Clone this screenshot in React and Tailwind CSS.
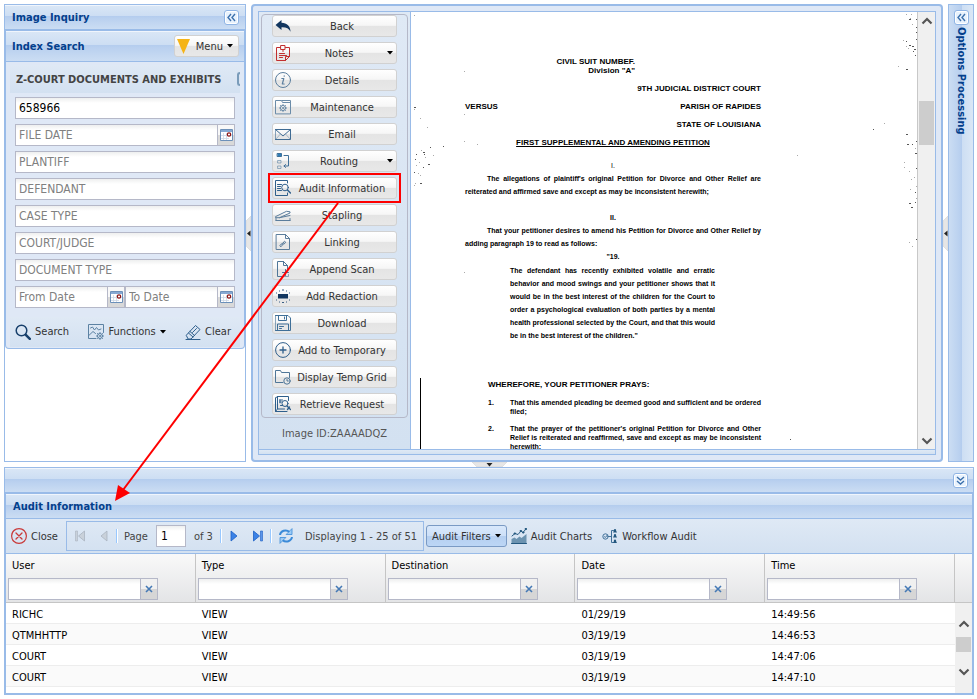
import React, { useState } from "react";

const HEADER_BG =
    "bg-[linear-gradient(180deg,#dae7f6_0%,#cddef3_45%,#b3ccee_46%,#b9d0ef_55%,#cbddf3_100%)] shadow-[inset_0_1px_0_#f0f5fc]";
const TOOLBAR_BG = "bg-linear-to-b from-[#dfe9f5] to-[#d3e1f1]";
const BUTTON_BG =
    "bg-[linear-gradient(180deg,#ffffff_0%,#f6f6f6_47%,#e4e4e4_50%,#e8e8e8_100%)] border border-[#d1d1d1] rounded-[3px]";
const FIELD_BG = "border border-[#b5b8c8] bg-[linear-gradient(180deg,#eeefef_0px,#ffffff_5px)]";

// Base wrapper for the 16px line icons
const Icon = ({ children, color = "#3f6f98" }) => (
    <svg
        viewBox="0 0 16 16"
        className="w-4 h-4 shrink-0"
        fill="none"
        stroke={color}
        strokeWidth="1"
        strokeLinecap="round"
        strokeLinejoin="round"
        aria-hidden="true"
    >
        {children}
    </svg>
);

const icons = {
    back: (
        <Icon color="none">
            <path d="M6.5 2 0.5 7l6 5V9.2c4.500-.2 7.500 1 9 4.600C15.500 8.500 12 4.900 6.500 4.800z" fill="#12365f" />
        </Icon>
    ),
    notes: (
        <Icon color="#c22f2f">
            <path d="M5.500 2.500h-4v13h9l4-4v-9h-4M10.500 15.500v-4h4" />
            <path d="M6 .5h4v4H6zM8 4.500v2" />
            <path d="M4.500 8.500h5M4.500 10.500h7M4.500 12.500h3" />
        </Icon>
    ),
    details: (
        <Icon color="#5c7f9f">
            <circle cx="8" cy="8" r="7.500" />
            <path d="M9.200 3.800v.4M6.800 6.500h2L7.300 12h1.900" strokeWidth="1.200" />
        </Icon>
    ),
    maintenance: (
        <Icon color="#6a8ba8">
            <path d="M.5 14.500v-13h6l1 2h8v11zM7 1.500h8.500v2" />
            <path d="M8 5.500v1M8 11.500v1M4.500 9h1M10.500 9h1M5.500 6.500l.7.700M9.800 10.800l.7.700M10.500 6.500l-.7.700M6.200 10.800l-.7.700" />
            <circle cx="8" cy="9" r="2.600" />
            <circle cx="8" cy="9" r=".6" />
        </Icon>
    ),
    email: (
        <Icon color="#3f6b93">
            <path d="M.5 3.500h15v10H.5zM.5 3.500 8 10l7.500-6.500" />
            <path d="m1 13 4-4.500M15 13l-4-4.500" strokeOpacity=".4" />
        </Icon>
    ),
    routing: (
        <Icon color="#3f6f98">
            <path d="M2.500.5h4v3h-4z" fill="#2f7fb8" />
            <path d="M3 7.500h3v2.500H3zM3 13h3v2.500H3z" strokeOpacity=".5" />
            <path d="M9 2.500h4.500v10.500H9M10.500 11.500 9 13l1.500 1.500" />
        </Icon>
    ),
    audit: (
        <Icon color="#2f5f8c">
            <path d="M12.500 3V.5H.5v15h12V13" />
            <path d="M2.500 4.500h4M2.500 6.500h3M2.500 8.500h3M2.500 10.500h4" />
            <circle cx="10" cy="7.500" r="3.300" />
            <path d="m12.500 10 3 3" strokeWidth="1.500" />
        </Icon>
    ),
    stapling: (
        <Icon color="#5b7d9c">
            <path d="M.8 9.500 11.500 4.300l3.500.5v1.200L4.500 10.700H.8z" />
            <path d="M4.500 10.700 15 8.500M1 13.500h14M1 11.500v2M15 11.500v2" />
        </Icon>
    ),
    linking: (
        <Icon color="#5b7d9c">
            <path d="M1.500.5h9l4 4v11h-13zM10.500.5v4h4" />
            <path d="m5 11.500 1.500-1.800 1.200 1-1.500 1.800zM8 9l1.500-1.800 1.200 1L9.200 10zM7 10.300l1.800-2" />
        </Icon>
    ),
    append: (
        <Icon color="#4f7698">
            <path d="M7 15.500H2.500V.5h6l4 4v4M8.500.5v4h4" />
            <path d="M10.500 8.500v6M7.500 11.500h6" />
            <path d="M9 15.500h4.500v-2" strokeOpacity=".6" />
        </Icon>
    ),
    redaction: (
        <Icon color="none">
            <path d="M3 6h10v4.500H3z" fill="#12365f" />
            <path
                d="M4 2.500h1v1H4zM7 1.500h2v1H7zM11 2.500h1v1h-1zM1 4.500h1v1H1zM14 4.500h1v1h-1zM1 11.500h1v1H1zM14 11.500h1v1h-1zM4 13.500h1v1H4zM7 14h2v1H7zM11 13.500h1v1h-1z"
                fill="#3b5f85"
            />
        </Icon>
    ),
    download: (
        <Icon color="#3f6f98">
            <path d="M.5.5h12.500l2.500 2.500v12.500H.5z" />
            <path d="M3.500.5v5h8v-5M9.500 2v2M2.500 15.500v-6.500h11v6.500M4.500 11.500h4M4.500 13.500h2" />
        </Icon>
    ),
    plus: (
        <Icon color="#2f5f8c">
            <circle cx="8" cy="8" r="7.400" />
            <path d="M8 5v6M5 8h6" strokeWidth="1.300" />
        </Icon>
    ),
    tempGrid: (
        <Icon color="#4f7698">
            <path d="M8 13.500H.5v-12h5l1 2h8v5" />
            <circle cx="12" cy="12" r="3.200" />
            <path d="M12 10.500V12h1.300" />
        </Icon>
    ),
    retrieve: (
        <Icon color="#2f5f8c">
            <path d="M.5 2v13.500h11.500M2.500.5h11v4M2.500.5v12.500h7M.5 2l2-1.500M.5 15.500l2-2.500" />
            <path d="M4.500 4h3M4.500 6h2M5.500 9.500h2M5 4v3" />
            <circle cx="10" cy="7.500" r="3" />
            <path d="m12 10 3.500 3.500M12.500 13.500l2-2.500" strokeWidth="1.300" />
        </Icon>
    ),
    search: (
        <Icon color="#173f6b">
            <circle cx="6.500" cy="6.500" r="5.300" strokeWidth="1.500" />
            <path d="m10.800 10.800 4 4" strokeWidth="2.500" />
        </Icon>
    ),
    functions: (
        <Icon color="#5c82a3">
            <path d="M8 14.500H.5V.5h15v8M.8 11.500 5 7.500l2.500 2" />
            <path d="m2.500 4 2-1 2 3 2-2.500 2 2.500 2.500-1" />
            <path d="M12 8.500v1M12 14.500v1M8.500 12h1M14.500 12h1M9.500 9.500l.7.700M13.800 13.800l.7.700M14.500 9.500l-.7.700M10.200 13.800l-.7.700" />
            <circle cx="12" cy="12" r="2.500" />
            <circle cx="12" cy="12" r=".6" />
        </Icon>
    ),
    clear: (
        <Icon color="#2f5f8c">
            <path d="m1.500 11 9-9.500 4.500 4-9 9.500H3.500zM3.500 9l4.500 4M5 7.500l4.500 4M7.500 8.500l4-4M1 15.500h14" />
        </Icon>
    ),
    close: (
        <Icon color="#c93a3a">
            <circle cx="8" cy="8" r="7.400" strokeWidth="1.200" />
            <path d="m5 5 6 6M11 5l-6 6" strokeWidth="1.300" />
        </Icon>
    ),
    charts: (
        <Icon color="#24587f">
            <path d="M.5 15.500V11l3-1.500 2 1.500 3-2.500 2 1.500 5-4v9.500z" fill="#6c93b0" stroke="none" />
            <path d="M.5 15.500h15" />
            <path d="m1 8 3-2.500 3 1L10 3l2 1.500L15 1" />
            <path d="M3.500 5h1v1h-1zM9.500 2.500h1v1h-1zM12 4h1v1h-1zM14.500.5h1v1h-1z" fill="#24587f" />
        </Icon>
    ),
    workflow: (
        <Icon color="#3f6f98">
            <circle cx="3.500" cy="8.500" r="2.700" />
            <path d="m2.300 8.500 1 1 2-2.300M6.500 8.500h3M11.500 2.500h-2v12h2" />
            <path d="M13 1a1 1 0 0 1 1 1.500l1 2h-4l1-2A1 1 0 0 1 13 1zM13 6a1 1 0 0 1 1 1.500l1 2h-4l1-2A1 1 0 0 1 13 6zM13 11.500a1 1 0 0 1 1 1.500l1 2h-4l1-2a1 1 0 0 1 1-1.500z" fill="#24587f" stroke="none" />
        </Icon>
    ),
    refresh: (
        <Icon color="#3a8ad8">
            <path d="M2 7C2.500 3 8 .8 11.500 4M14 9c-.5 4-6 6.200-9.500 3" strokeWidth="2" strokeLinecap="butt" />
            <path d="M14 1v5.500H8.500zM2 15V9.500h5.500z" fill="#9ccbf5" strokeWidth=".8" />
        </Icon>
    ),
};

const Caret = () => (
    <svg viewBox="0 0 6 4" className="w-[6px] h-[4px] shrink-0" aria-hidden="true">
        <path d="M0 0h6L3 3.500z" fill="#000" />
    </svg>
);

// Small square tool in panel headers
const ToolButton = ({ label, down = false }) => (
    <button
        type="button"
        aria-label={label}
        className="w-[15px] h-[15px] shrink-0 flex items-center justify-center rounded-[3px] border border-[#8fb4e4] bg-[#e8f2fd] shadow-[inset_0_0_0_1px_#ffffff]"
    >
        <svg
            viewBox="0 0 9 9"
            className={down ? "w-[9px] h-[9px] -rotate-90" : "w-[9px] h-[9px]"}
            fill="none"
            stroke="#3d71ad"
            strokeWidth="1.400"
            aria-hidden="true"
        >
            <path d="M4 1 1 4.500 4 8M8 1 5 4.500 8 8" />
        </svg>
    </button>
);

const Splitter = () => (
    <div className="w-[5px] shrink-0 flex items-center">
        <svg viewBox="0 0 5 35" className="w-[5px] h-[35px]" aria-hidden="true">
            <path d="M5 0 0 5v25l5 5z" fill="#e6e6e6" stroke="#cfcfcf" strokeWidth=".5" />
            <path d="M4.500 14.500v6L1 17.500z" fill="#222" />
        </svg>
    </div>
);

const Chevron = ({ down = false }) => (
    <svg
        viewBox="0 0 12 8"
        className={down ? "w-3 h-2 rotate-180" : "w-3 h-2"}
        fill="none"
        stroke="#555"
        strokeWidth="2.200"
        aria-hidden="true"
    >
        <path d="m1.500 6.500 4.500-4.500 4.500 4.500" />
    </svg>
);

const DateTrigger = ({ label }) => (
    <button
        type="button"
        aria-label={label}
        className="w-[17px] h-[22px] shrink-0 flex items-center justify-center border border-l-0 border-[#b5b8c8] bg-[linear-gradient(180deg,#f8f8f8_50%,#d9d9d9_51%)]"
    >
        <svg viewBox="0 0 13 12" className="w-[13px] h-[12px]" aria-hidden="true">
            <path d="M.5.5h12v11H.5z" fill="#fff" stroke="#6c90b9" />
            <path d="M1 1h11v2H1z" fill="#86a9d3" />
            <path d="M3.500 4v7M6.500 4v7M1 6.500h11M1 9.500h8" stroke="#ccd7e4" strokeWidth=".8" />
            <circle cx="9" cy="5.500" r="1.700" fill="#fff" stroke="#8c1414" strokeWidth="1.200" />
        </svg>
    </button>
);

const Field = ({ label, value, onChange, date = false }) => (
    <div className="flex flex-1 min-w-0">
        <input
            type="text"
            aria-label={label}
            placeholder={label}
            value={value}
            onChange={onChange}
            className={`flex-1 min-w-0 h-[22px] px-[3px] text-[12px] text-black placeholder:text-[#808080] outline-none ${FIELD_BG}`}
        />
        {date && <DateTrigger label={`Pick ${label}`} />}
    </div>
);

const actions = [
    { name: "Back", icon: "back" },
    { name: "Notes", icon: "notes", menu: true },
    { name: "Details", icon: "details" },
    { name: "Maintenance", icon: "maintenance" },
    { name: "Email", icon: "email" },
    { name: "Routing", icon: "routing", menu: true },
    { name: "Audit Information", icon: "audit" },
    { name: "Stapling", icon: "stapling" },
    { name: "Linking", icon: "linking" },
    { name: "Append Scan", icon: "append" },
    { name: "Add Redaction", icon: "redaction" },
    { name: "Download", icon: "download" },
    { name: "Add to Temporary", icon: "plus" },
    { name: "Display Temp Grid", icon: "tempGrid" },
    { name: "Retrieve Request", icon: "retrieve" },
];

const columns = ["User", "Type", "Destination", "Date", "Time"];

const rows = [
    ["RICHC", "VIEW", "", "01/29/19", "14:49:56"],
    ["QTMHHTTP", "VIEW", "", "03/19/19", "14:46:53"],
    ["COURT", "VIEW", "", "03/19/19", "14:47:06"],
    ["COURT", "VIEW", "", "03/19/19", "14:47:10"],
];

const SearchPanel = () => {
    const [form, setForm] = useState({ number: "658966" });
    const bind = (key) => ({
        value: form[key] || "",
        onChange: (e) => setForm({ ...form, [key]: e.target.value }),
    });

    return (
        <aside className="w-[242px] shrink-0 border border-[#99bbe8]">
            <div className={`h-6 pl-[7px] pr-[6px] flex items-center justify-between ${HEADER_BG}`}>
                <h1 className="pt-[2px] font-bold text-[#04408c]">Image Inquiry</h1>
                <ToolButton label="Collapse search panel" />
            </div>
            <section className="border border-t-2 border-[#99bbe8] rounded-b-[4px] bg-[#dfe8f6]">
                <div className={`h-[30px] pl-[6px] pr-[5px] flex items-center justify-between ${HEADER_BG}`}>
                    <h2 className="pt-[2px] font-bold text-[#04408c]">Index Search</h2>
                    <button type="button" className={`h-[22px] pl-[2px] pr-[5px] flex items-center gap-1 text-[#333] ${BUTTON_BG}`}>
                        <svg viewBox="0 0 13 15" className="w-[13px] h-[15px] mr-[2px]" aria-hidden="true">
                            <path d="M0 0h13L6.500 15z" fill="#f5b417" />
                        </svg>
                        <span className="pt-[2px]">Menu</span>
                        <Caret />
                    </button>
                </div>
                <div className="border-t border-[#99bbe8] px-1 pt-[3px] pb-px">
                    <div className={`h-7 pl-[6px] flex items-center overflow-hidden whitespace-nowrap font-bold text-[#444] ${TOOLBAR_BG}`}>
                        <span className="pt-[2px]">Z-COURT DOCUMENTS AND EXHIBITS</span>
                        <span className="ml-auto w-[3px] h-[14px] shrink-0 rounded-l-[3px] border-2 border-r-0 border-[#7a9cba]"></span>
                    </div>
                    <form className="px-[5px] pt-1 flex flex-col gap-[5px]" onSubmit={(e) => e.preventDefault()}>
                        <div className="flex"><Field label="NUMBER" {...bind("number")} /></div>
                        <div className="flex"><Field label="FILE DATE" date {...bind("fileDate")} /></div>
                        <div className="flex"><Field label="PLANTIFF" {...bind("plaintiff")} /></div>
                        <div className="flex"><Field label="DEFENDANT" {...bind("defendant")} /></div>
                        <div className="flex"><Field label="CASE TYPE" {...bind("caseType")} /></div>
                        <div className="flex"><Field label="COURT/JUDGE" {...bind("court")} /></div>
                        <div className="flex"><Field label="DOCUMENT TYPE" {...bind("docType")} /></div>
                        <div className="flex">
                            <Field label="From Date" date {...bind("from")} />
                            <Field label="To Date" date {...bind("to")} />
                        </div>
                    </form>
                    <div className={`h-[30px] mt-[9px] pl-[5px] pr-[9px] flex items-center justify-between text-[#333] ${TOOLBAR_BG}`}>
                        <button type="button" className="flex items-center gap-1">{icons.search}Search</button>
                        <button type="button" className="flex items-center gap-1">{icons.functions}Functions<Caret /></button>
                        <button type="button" className="flex items-center gap-1">{icons.clear}Clear</button>
                    </div>
                </div>
            </section>
        </aside>
    );
};

// Scanner specks along the page edges: [x, y, darkness]
const specks = [
    [3, 3, 1], [3, 95, 3], [3, 97, 1], [9, 106, 1], [16, 115, 1], [53, 59, 1], [53, 102, 1], [53, 129, 1],
    [66, 132, 1], [32, 134, 2], [19, 135, 2], [10, 138, 1], [5, 142, 2], [12, 140, 3], [13, 142, 2], [4, 147, 2],
    [14, 145, 1], [22, 143, 1], [17, 152, 3], [8, 150, 1], [5, 153, 1], [12, 155, 2], [7, 161, 1], [3, 160, 2],
    [9, 163, 1], [4, 171, 1], [9, 171, 3], [3, 173, 1], [53, 260, 1],
    [495, 2, 1], [500, 2, 1], [498, 7, 3], [505, 7, 3], [501, 12, 1], [505, 15, 3], [505, 20, 2], [499, 6, 1],
    [505, 27, 3], [495, 29, 2], [492, 28, 1], [498, 33, 3], [501, 34, 3], [497, 36, 1], [503, 37, 3], [502, 39, 2],
    [495, 34, 1], [504, 43, 2], [487, 54, 1], [495, 57, 3], [473, 111, 1], [462, 117, 2], [495, 122, 3],
    [505, 129, 2], [496, 132, 3], [501, 132, 2], [504, 136, 1], [504, 141, 3], [493, 150, 1], [493, 155, 1],
    [505, 156, 2], [498, 159, 1], [503, 165, 1], [500, 167, 1], [505, 174, 1], [499, 177, 1], [504, 180, 2],
    [505, 186, 1], [504, 190, 2], [498, 191, 3], [500, 195, 3], [386, 143, 1], [505, 227, 2], [498, 230, 1],
    [501, 234, 1], [379, 427, 2],
];

const ScannedPage = () => (
    <div className="relative flex-1 contain-size overflow-hidden bg-white">
        <article className="w-[296px] ml-[54px] pt-[45px] font-['Liberation_Sans',sans-serif] text-[7px] font-bold leading-[13px] text-black">
            <header className="text-[8px]">
                <div className="w-[170px] leading-[9px] text-right">CIVIL SUIT NUMBEF.<br />Division "A"</div>
                <div className="mt-[5px] leading-[18px] text-right">9TH JUDICIAL DISTRICT COURT</div>
                <div className="leading-[18px] flex justify-between"><span>VERSUS</span><span>PARISH OF RAPIDES</span></div>
                <div className="leading-[18px] text-right">STATE OF LOUISIANA</div>
                <div className="leading-[18px] text-center underline">FIRST SUPPLEMENTAL AND AMENDING PETITION</div>
            </header>
            <div className="mt-[7px] text-center font-normal">I.</div>
            <p className="indent-[22px] text-justify">
                The allegations of plaintiff's original Petition for Divorce and Other Relief are reiterated and affirmed save
                and except as may be inconsistent herewith;
            </p>
            <div className="mt-[13px] text-center">II.</div>
            <p className="indent-[22px] text-justify">
                That your petitioner desires to amend his Petition for Divorce and Other Relief by adding paragraph 19 to read as
                follows:
            </p>
            <div className="text-center">"19.</div>
            <p className="mt-px ml-[45px] w-[205px] text-justify">
                The defendant has recently exhibited volatile and erratic behavior and mood swings and your petitioner shows that
                it would be in the best interest of the children for the Court to order a psychological evaluation of both parties
                by a mental health professional selected by the Court, and that this would be in the best interest of the
                children."
            </p>
            <h3 className="mt-[38px] pl-[23px] text-[8px] leading-[9px]">WHEREFORE, YOUR PETITIONER PRAYS:</h3>
            <ol className="mt-[9px] pl-[23px] flex flex-col gap-2 leading-[9px]">
                <li className="flex">
                    <span className="w-[22px] shrink-0">1.</span>
                    <span className="text-justify">That this amended pleading be deemed good and sufficient and be ordered filed;</span>
                </li>
                <li className="flex">
                    <span className="w-[22px] shrink-0">2.</span>
                    <span className="text-justify">
                        That the prayer of the petitioner's original Petition for Divorce and Other Relief is reiterated and
                        reaffirmed, save and except as may be inconsistent herewith;
                    </span>
                </li>
            </ol>
        </article>
        <svg className="absolute left-0 top-0 w-full h-full" aria-hidden="true">
            {specks.map(([x, y, dark]) => (
                <rect key={`${x}-${y}`} x={x} y={y} width={dark > 2 ? 2 : 1} height="1" fill={dark > 1 ? "#555" : "#aaa"} />
            ))}
            <path d="M9.500 366v71" stroke="#000" strokeWidth="1" />
        </svg>
    </div>
);

const Viewer = () => (
    <main className="flex-1 min-w-0 flex flex-col border-2 border-[#99bbe8] rounded-[4px] bg-[#dfe8f6] p-[5px]">
        <div className="flex-1 flex border border-[#99bbe8]">
            <div className={`w-[152px] shrink-0 p-[2px] border-r border-[#99bbe8] ${TOOLBAR_BG}`}>
                <div className="border border-[#b5b8c8] rounded-[4px] px-[10px] pb-[2px] flex flex-col gap-[5px]">
                    {actions.map(({ name, icon, menu }) => (
                        <button key={name} type="button" className={`h-[22px] pl-[2px] pr-[3px] flex items-center text-[#333] ${BUTTON_BG}`}>
                            {icons[icon]}
                            <span className="flex-1 pt-[2px] text-center whitespace-nowrap">{name}</span>
                            {menu && <Caret />}
                        </button>
                    ))}
                </div>
                <div className="h-[29px] pt-[2px] flex items-center justify-center text-[#555]">Image ID:ZAAAADQZ</div>
            </div>
            <ScannedPage />
            <div className="w-[18px] shrink-0 border-l border-[#c8c8c8] bg-[#f0f0f0] flex flex-col items-center pt-[5px] pb-1">
                <Chevron />
                <div className="mt-[76px] w-[15px] h-11 bg-[#cdcdcd]"></div>
                <div className="mt-auto flex"><Chevron down /></div>
            </div>
        </div>
        <div className={`h-[5px] border border-t-0 border-[#99bbe8] ${TOOLBAR_BG}`}></div>
    </main>
);

const PageArrow = ({ label, disabled = false, bar = false, back = false }) => (
    <button type="button" aria-label={label} disabled={disabled} className="w-6 h-[22px] flex items-center justify-center">
        <svg viewBox="0 0 12 12" className={back ? "w-3 h-3 rotate-180" : "w-3 h-3"} aria-hidden="true">
            <path
                d={bar ? "M1.500 1v10L7.500 6z" : "M3 1v10l6-5z"}
                fill={disabled ? "#c9d1da" : "#3b82e6"}
                stroke={disabled ? "#a9b4c0" : "#1c5fc4"}
                strokeWidth=".8"
            />
            {bar && <path d="M8.500 1h2v10h-2z" fill={disabled ? "#c9d1da" : "#5b95ea"} stroke={disabled ? "#a9b4c0" : "#1c5fc4"} strokeWidth=".6" />}
        </svg>
    </button>
);

const Separator = () => <span className="w-[2px] h-[14px] shrink-0 border-l border-[#98c8ff] border-r border-r-white"></span>;

const AuditPanel = () => {
    const [page, setPage] = useState("1");

    return (
        <section className="border border-[#99bbe8]">
            <div className={`h-6 pr-[5px] flex items-center justify-end ${HEADER_BG}`}>
                <ToolButton label="Collapse audit panel" down />
            </div>
            <div className="border-t-2 border-x border-b border-[#99bbe8]">
                <h2 className={`h-6 pt-[2px] pl-[7px] flex items-center font-bold text-[#04408c] ${HEADER_BG}`}>Audit Information</h2>
                <div className={`border-y border-[#99bbe8] h-9 pl-[5px] flex items-center text-[#333] whitespace-nowrap ${TOOLBAR_BG}`}>
                    <button type="button" className="w-[55px] flex items-center gap-1">
                        {icons.close}
                        <span className="pt-[2px]">Close</span>
                    </button>
                    <div className="h-[30px] pl-px pr-[6px] border border-[#99bbe8] flex items-center text-[#444]">
                        <PageArrow label="First page" disabled bar back />
                        <PageArrow label="Previous page" disabled back />
                        <Separator />
                        <label className="ml-[6px] flex items-center gap-2">
                            <span className="pt-[2px]">Page</span>
                            <input
                                type="text"
                                value={page}
                                onChange={(e) => setPage(e.target.value)}
                                className={`w-[30px] h-[22px] px-1 text-[12px] text-black outline-none ${FIELD_BG}`}
                            />
                        </label>
                        <span className="pt-[2px] ml-2 mr-[7px]">of 3</span>
                        <Separator />
                        <PageArrow label="Next page" />
                        <PageArrow label="Last page" bar />
                        <Separator />
                        <button type="button" aria-label="Refresh" className="ml-[6px] mr-[11px]">{icons.refresh}</button>
                        <span className="pt-[2px]">Displaying 1 - 25 of 51</span>
                    </div>
                    <button
                        type="button"
                        className="ml-[2px] h-[22px] px-[5px] flex items-center gap-1 rounded-[3px] border border-[#7a9ac4] bg-[linear-gradient(180deg,#d9e8fb_0%,#cde0f8_48%,#b5cff0_52%,#bcd6f5_100%)]"
                    >
                        <span className="pt-[2px]">Audit Filters</span>
                        <Caret />
                    </button>
                    <button type="button" className="ml-1 flex items-center gap-1">
                        {icons.charts}
                        <span className="pt-[2px]">Audit Charts</span>
                    </button>
                    <button type="button" className="ml-[10px] flex items-center gap-1">
                        {icons.workflow}
                        <span className="pt-[2px]">Workflow Audit</span>
                    </button>
                </div>
                <table className="w-full table-fixed border-separate border-spacing-0 text-black">
                    <colgroup>
                        {columns.map((c) => <col key={c} />)}
                        <col className="w-[17px]" />
                    </colgroup>
                    <thead>
                        <tr className="bg-linear-to-b from-[#f9f9f9] to-[#e3e4e6]">
                            {columns.map((c) => (
                                <th key={c} className="h-[49px] px-[2px] border-r border-b border-[#c5c5c5] font-normal text-left align-bottom pb-[2px]">
                                    <div className="px-1 h-6 leading-6">{c}</div>
                                    <div className="flex w-[150px]">
                                        <input type="text" aria-label={`Filter ${c}`} className={`flex-1 min-w-0 h-[22px] px-1 outline-none ${FIELD_BG}`} />
                                        <button
                                            type="button"
                                            aria-label={`Clear ${c} filter`}
                                            className="w-[17px] h-[22px] flex items-center justify-center border border-l-0 border-[#b5b8c8] bg-[linear-gradient(180deg,#f0f0f0_50%,#d6d6d6_51%)]"
                                        >
                                            <svg viewBox="0 0 8 8" className="w-2 h-2" stroke="#4579b5" strokeWidth="1.600" aria-hidden="true">
                                                <path d="m1 1 6 6M7 1 1 7" />
                                            </svg>
                                        </button>
                                    </div>
                                </th>
                            ))}
                            <td className="border-b border-[#c5c5c5]"></td>
                        </tr>
                    </thead>
                    <tbody>
                        {rows.map((row, i) => (
                            <tr key={row[4]} className={i % 2 ? "bg-[#fafafa]" : "bg-white"}>
                                {row.map((cell, j) => (
                                    <td key={columns[j]} className="h-[21px] px-[6px] pt-[3px] pb-0 border-b border-[#ededed]">{cell}</td>
                                ))}
                                {i === 0 && (
                                    <td rowSpan={rows.length + 1} className="px-0 pt-[17px] pb-0 align-top bg-[#f0f0f0]">
                                        <div className="flex flex-col items-center">
                                            <Chevron />
                                            <div className="w-[15px] h-[15px] mt-[9px] mb-4 bg-[#cdcdcd]"></div>
                                            <Chevron down />
                                        </div>
                                    </td>
                                )}
                            </tr>
                        ))}
                        <tr>
                            <td colSpan={columns.length} className="h-[6px] p-0"></td>
                        </tr>
                    </tbody>
                </table>
            </div>
        </section>
    );
};

const App = () => (
    <div className="relative bg-white pl-1 pr-[3px] py-1 font-['DejaVu_Sans_Condensed','DejaVu_Sans',sans-serif] text-[11px] leading-[14px]">
        <div className="flex">
            <SearchPanel />
            <Splitter />
            <Viewer />
            <Splitter />
            <aside className="w-[26px] shrink-0 border border-[#99bbe8] flex flex-col items-center gap-[2px] pt-[5px] bg-[linear-gradient(270deg,#dae7f6_0%,#cddef3_45%,#b3ccee_46%,#b9d0ef_55%,#cbddf3_100%)]">
                <ToolButton label="Expand options" />
                <h2 className="font-bold text-[#04408c] [writing-mode:vertical-rl] whitespace-nowrap">Options Processing</h2>
            </aside>
        </div>
        <div className="h-[5px] flex justify-center">
            <svg viewBox="0 0 35 5" className="w-[35px] h-[5px]" aria-hidden="true">
                <path d="M0 0h35l-5 5H5z" fill="#e6e6e6" stroke="#cfcfcf" strokeWidth=".5" />
                <path d="M14.500 1h6l-3 3.500z" fill="#222" />
            </svg>
        </div>
        <AuditPanel />
        {/* Callout pointing from the toolbar action to its grid */}
        <svg className="absolute left-0 top-0 w-[420px] h-[520px] pointer-events-none" fill="none" stroke="#fe0000" strokeWidth="2" aria-hidden="true">
            <rect x="269" y="174" width="131" height="28" />
            <path d="M338 203 123 490" />
            <path d="m115 501 3-16 12 8z" fill="#fe0000" stroke="none" />
        </svg>
    </div>
);

export default App;
